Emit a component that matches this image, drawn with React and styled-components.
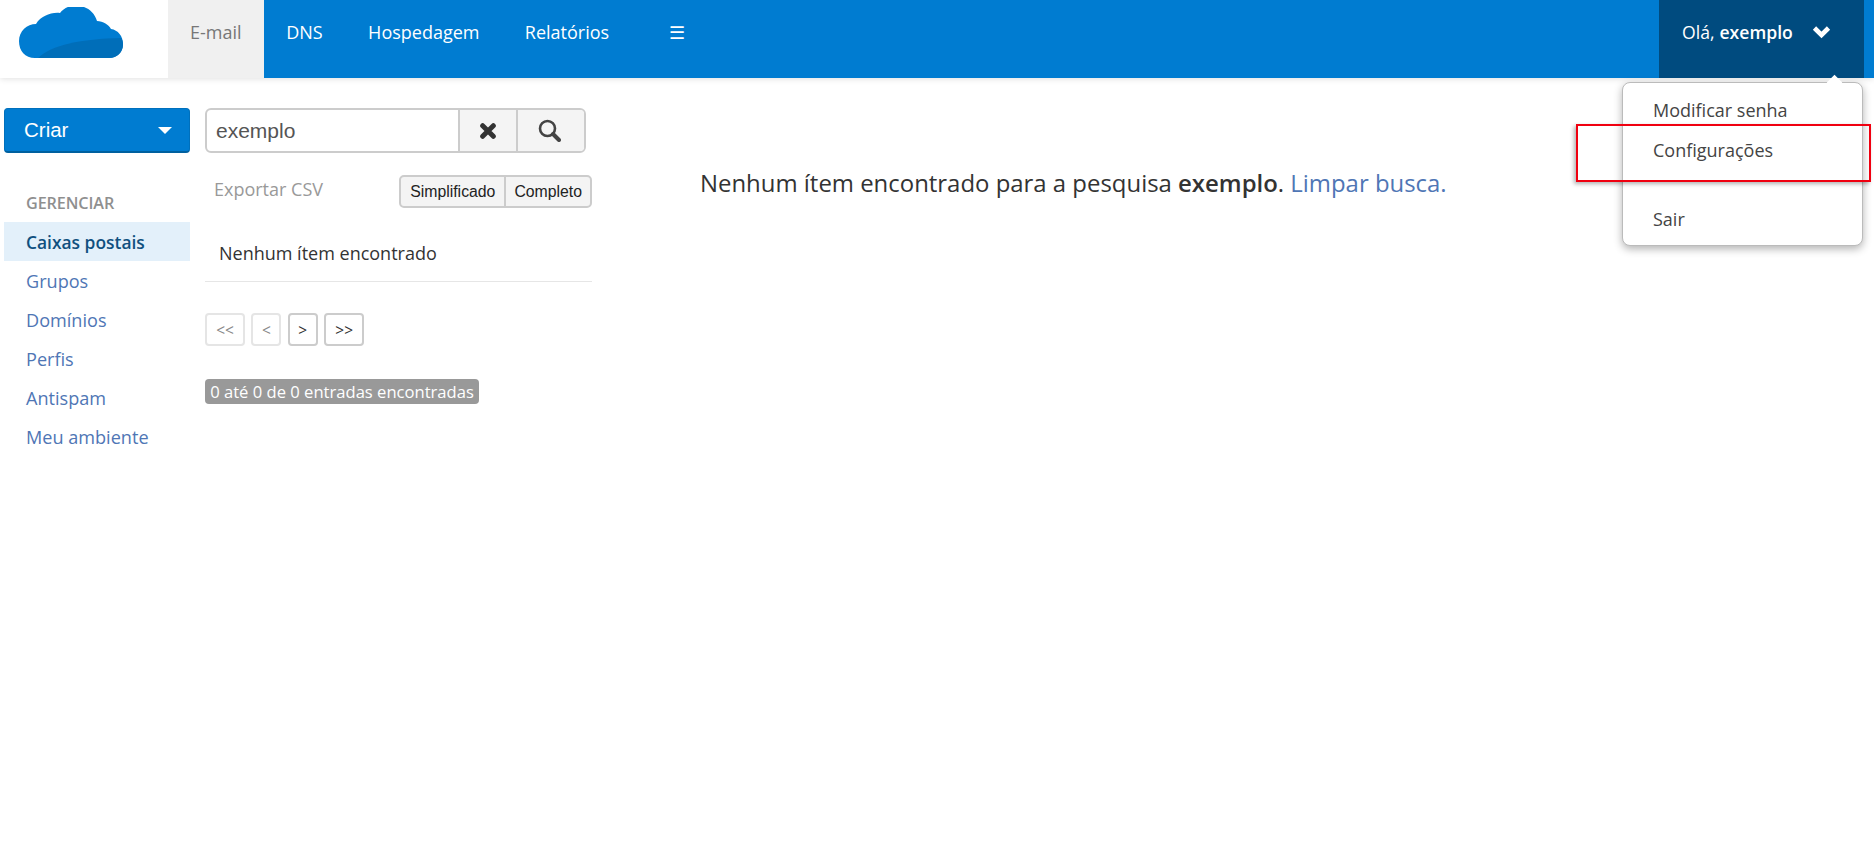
import React from 'react';
import styled, { createGlobalStyle } from 'styled-components';

const GlobalStyle = createGlobalStyle`
    html, body {
        margin: 0;
        padding: 0;
        background: #fff;
        font-family: "Open Sans", "Noto Sans", sans-serif;
        color: #333;
    }
`

const Page = styled.div`
    position: relative;
    width: 1874px;
    height: 841px;
    overflow: hidden;
`

const Navbar = styled.div`
    display: flex;
    height: 78px;
    background: #007cd1;
    box-shadow: 0 1px 6px rgba(0, 0, 0, 0.12);
`

const LogoBox = styled.div`
    display: flex;
    width: 168px;
    padding: 7px 0 0 19px;
    box-sizing: border-box;
    background: #fff;
`

const NavList = styled.div`
    display: flex;
    flex-grow: 1;
`

const NavItem = styled.div`
    display: flex;
    height: 78px;
    padding: 0 ${props => props.$pad || 22.7}px;
    padding-bottom: 15px;
    box-sizing: border-box;
    align-items: center;
    font-size: 18px;
    color: ${props => props.$active ? '#777' : '#fff'};
    background: ${props => props.$active ? '#f0f0f0' : 'transparent'};
`

const UserBox = styled.div`
    display: flex;
    width: 205px;
    margin-right: 10px;
    padding: 0 0 15px 23px;
    box-sizing: border-box;
    align-items: center;
    font-size: 17.6px;
    color: #fff;
    background: #004b7f;

    b {
        font-weight: 600;
        margin-left: 5px;
    }

    svg {
        margin-left: 19px;
    }
`

const Menu = styled.div`
    position: absolute;
    top: 82px;
    left: 1622px;
    width: 241px;
    height: 164px;
    box-sizing: border-box;
    border: 1px solid #bbb;
    border-radius: 8px;
    background: #fff;
    box-shadow: 0 3px 8px rgba(0, 0, 0, 0.3);

    &::before {
        content: '';
        position: absolute;
        top: -6px;
        left: 206px;
        width: 11px;
        height: 11px;
        background: #fff;
        transform: rotate(45deg);
    }
`

const MenuItem = styled.div`
    height: ${props => props.$height}px;
    padding-left: 30px;
    font-size: 18px;
    line-height: 40px;
    color: #444;
`

const MenuList = styled.div`
    padding-top: 7px;
`

const RedBox = styled.div`
    position: absolute;
    top: 124px;
    left: 1576px;
    width: 295px;
    height: 58px;
    box-sizing: border-box;
    border: 2px solid #f00010;
    box-shadow: -2px 2px 4px rgba(0, 0, 0, 0.3);
`

const Content = styled.div`
    display: flex;
    padding: 30px 0 0 4px;
`

const Sidebar = styled.div`
    display: flex;
    flex-direction: column;
    width: 186px;
`

const CreateButton = styled.div`
    display: flex;
    height: 45px;
    padding: 0 17px 0 19px;
    box-sizing: border-box;
    justify-content: space-between;
    align-items: center;
    border-radius: 4px;
    border: 1px solid #0070bc;
    border-bottom: 2px solid #00609f;
    background: #007cd1;
    font-family: "Liberation Sans", Arial, sans-serif;
    font-size: 20.5px;
    color: #fff;
`

const Caret = styled.div`
    width: 0;
    height: 0;
    border-left: 7px solid transparent;
    border-right: 7px solid transparent;
    border-top: 7px solid #fff;
`

const SideTitle = styled.div`
    margin: 38px 0 0 22px;
    height: 31px;
    font-size: 16.2px;
    font-weight: 600;
    line-height: 24px;
    color: #8f8f8f;
    letter-spacing: -0.1px;
`

const SideItem = styled.div`
    display: flex;
    height: 39px;
    padding-left: 22px;
    align-items: center;
    font-size: ${props => props.$active ? 17.4 : 18.1}px;
    font-weight: ${props => props.$active ? 600 : 400};
    color: ${props => props.$active ? '#10507f' : '#4f76b5'};
    background: ${props => props.$active ? '#e3f0fa' : 'transparent'};
`

const ListColumn = styled.div`
    display: flex;
    flex-direction: column;
    width: 387px;
    margin-left: 15px;
`

const SearchBar = styled.div`
    display: flex;
    width: 381px;
    height: 45px;
    box-sizing: border-box;
    border: 2px solid #ccc;
    border-radius: 6px;
    overflow: hidden;
`

const SearchInput = styled.div`
    display: flex;
    flex-grow: 1;
    padding-left: 9px;
    align-items: center;
    font-family: "Liberation Sans", Arial, sans-serif;
    font-size: 21px;
    color: #555;
`

const SearchButton = styled.div`
    display: flex;
    width: ${props => props.$width}px;
    box-sizing: border-box;
    padding-right: ${props => props.$shift || 0}px;
    justify-content: center;
    align-items: center;
    border-left: 2px solid #ccc;
    background: #f4f4f4;
    color: #333;
`

const ExportRow = styled.div`
    display: flex;
    height: 33px;
    margin-top: 22px;
    justify-content: space-between;
    align-items: center;
`

const ExportLink = styled.div`
    margin: 0 0 6px 9px;
    font-size: 18px;
    color: #999;
`

const ViewSwitch = styled.div`
    display: flex;
    height: 33px;
    box-sizing: border-box;
    border: 2px solid #ccc;
    border-radius: 5px;
    background: #f4f4f4;
    font-family: "Liberation Sans", Arial, sans-serif;
    font-size: 15.8px;
    color: #222;
`

const ViewOption = styled.div`
    display: flex;
    padding: 0 ${props => props.$pad}px;
    align-items: center;
    border-left: ${props => props.$divided ? '2px solid #ccc' : 'none'};
`

const EmptyRow = styled.div`
    display: flex;
    height: 74px;
    padding: 16px 0 0 14px;
    box-sizing: border-box;
    align-items: center;
    border-bottom: 1px solid #e6e6e6;
    font-size: 18px;
    color: #333;
`

const Pager = styled.div`
    display: flex;
    margin-top: 31px;
    gap: 6.4px;
`

const PageButton = styled.div`
    display: flex;
    width: ${props => props.$width}px;
    height: 33px;
    box-sizing: border-box;
    justify-content: center;
    align-items: center;
    border: 2px solid ${props => props.$off ? '#e5e5e5' : '#ccc'};
    border-radius: 4px;
    font-size: 15.5px;
    color: ${props => props.$off ? '#888' : '#333'};
`

const Counter = styled.div`
    display: flex;
    width: 274px;
    height: 25px;
    margin-top: 33px;
    justify-content: center;
    align-items: center;
    border-radius: 4px;
    background: #999;
    font-size: 16.6px;
    color: #fff;
    white-space: nowrap;
`

const Message = styled.div`
    margin: 60px 0 0 108px;
    font-size: 23.93px;
    line-height: 30px;
    color: #333;
    white-space: nowrap;

    b {
        font-weight: 600;
    }

    a {
        color: #4f76b5;
    }
`

const Logo = () => (
    <svg width="104" height="52" viewBox="0 0 104 52">
        <path fill="#007cd1" d="M16 51 C6 51 0 44 0 34 C0 24 8 17 17 17 C22 9 32 5 41 6 C47 -2 58 -3 65 0 C71 2 76 7 78 14 C84 14 90 18 92 22 C99 23 104 29 104 37 C104 45 98 51 90 51 Z" />
        <path fill="#006eb9" d="M19 51 C32 38 62 32 102 31 C104 34 104 36 104 38 C104 45 98 51 90 51 Z" />
    </svg>
);

const Chevron = () => (
    <svg width="19" height="14" viewBox="0 0 19 14">
        <path d="M2.5 3 L9.5 10 L16.5 3" fill="none" stroke="#fff" strokeWidth="4.6" />
    </svg>
);

const CrossIcon = () => (
    <svg width="16" height="16" viewBox="0 0 18 18">
        <path d="M3 3 L15 15 M15 3 L3 15" fill="none" stroke="#333" strokeWidth="5.6" strokeLinecap="round" />
    </svg>
);

const SearchIcon = () => (
    <svg width="23" height="23" viewBox="0 0 23 23">
        <circle cx="9.5" cy="9.5" r="7.5" fill="none" stroke="#444" strokeWidth="2.6" />
        <path d="M15 15 L21 21" fill="none" stroke="#444" strokeWidth="4" strokeLinecap="round" />
    </svg>
);

class App extends React.Component {
    renderSideItems = () => {
        const items = ['Caixas postais', 'Grupos', 'Domínios', 'Perfis', 'Antispam', 'Meu ambiente'];
        return items.map((item, i) => <SideItem key={item} $active={i === 0}>{item}</SideItem>);
    }

    render() {
        return (
            <Page>
                <GlobalStyle />
                <Navbar>
                    <LogoBox><Logo /></LogoBox>
                    <NavList>
                        <NavItem $active $pad={22}>E-mail</NavItem>
                        <NavItem>DNS</NavItem>
                        <NavItem>Hospedagem</NavItem>
                        <NavItem>Relatórios</NavItem>
                        <NavItem $pad={37}>☰</NavItem>
                    </NavList>
                    <UserBox>
                        Olá, <b>exemplo</b>
                        <Chevron />
                    </UserBox>
                </Navbar>
                <Content>
                    <Sidebar>
                        <CreateButton>Criar<Caret /></CreateButton>
                        <SideTitle>GERENCIAR</SideTitle>
                        {this.renderSideItems()}
                    </Sidebar>
                    <ListColumn>
                        <SearchBar>
                            <SearchInput>exemplo</SearchInput>
                            <SearchButton $width={58}><CrossIcon /></SearchButton>
                            <SearchButton $width={68} $shift={4}><SearchIcon /></SearchButton>
                        </SearchBar>
                        <ExportRow>
                            <ExportLink>Exportar CSV</ExportLink>
                            <ViewSwitch>
                                <ViewOption $pad={9}>Simplificado</ViewOption>
                                <ViewOption $pad={8} $divided>Completo</ViewOption>
                            </ViewSwitch>
                        </ExportRow>
                        <EmptyRow>Nenhum ítem encontrado</EmptyRow>
                        <Pager>
                            <PageButton $width={40} $off>&lt;&lt;</PageButton>
                            <PageButton $width={30} $off>&lt;</PageButton>
                            <PageButton $width={30}>&gt;</PageButton>
                            <PageButton $width={40}>&gt;&gt;</PageButton>
                        </Pager>
                        <Counter>0 até 0 de 0 entradas encontradas</Counter>
                    </ListColumn>
                    <Message>
                        Nenhum ítem encontrado para a pesquisa <b>exemplo</b>. <a>Limpar busca.</a>
                    </Message>
                </Content>
                <Menu>
                    <MenuList>
                        <MenuItem $height={40}>Modificar senha</MenuItem>
                        <MenuItem $height={69}>Configurações</MenuItem>
                        <MenuItem $height={40}>Sair</MenuItem>
                    </MenuList>
                </Menu>
                <RedBox />
            </Page>
        );
    }
}

export default App;
